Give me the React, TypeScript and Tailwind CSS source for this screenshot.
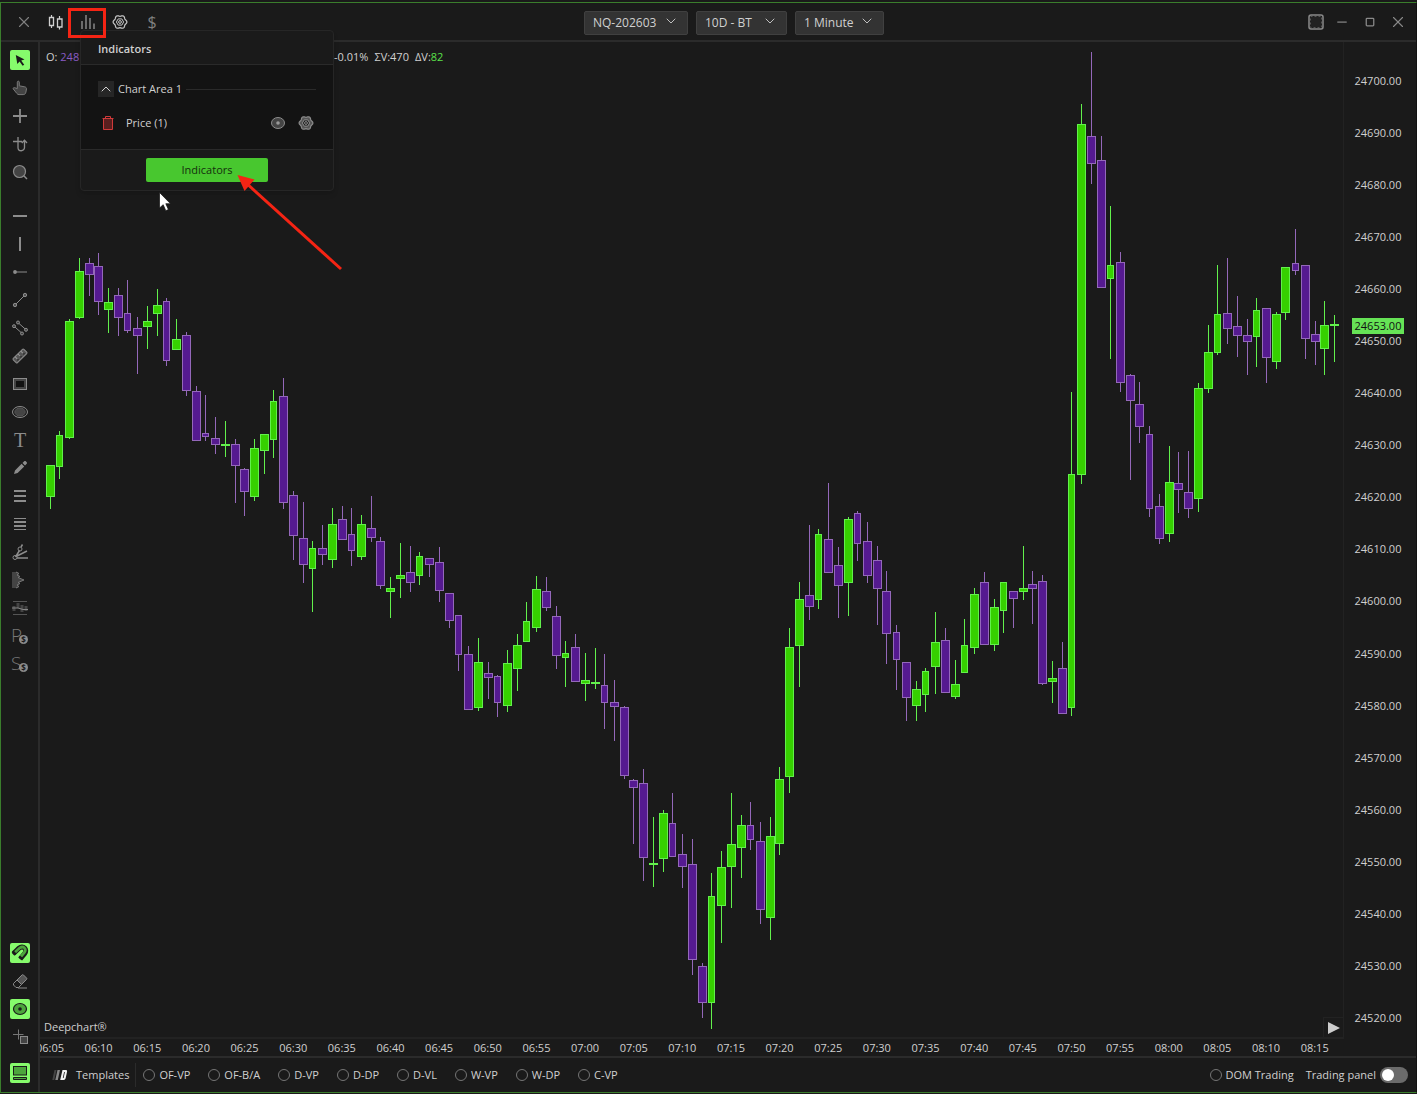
import type { ReactNode } from "react";
import { ChevronDown, ChevronUp, Minus, Square, X } from "lucide-react";

// [high, body top, body bottom, low, up]
type Candle = [number, number, number, number, 0 | 1];

const CANDLES: Candle[] = [
  [465, 465, 497, 509, 1], [431, 435, 467, 479, 1], [319, 321, 438, 439, 1], [258, 271, 318, 319, 1],
  [258, 263, 275, 296, 0], [253, 266, 302, 315, 0], [288, 302, 310, 333, 1], [288, 295, 318, 336, 0],
  [280, 313, 331, 333, 0], [317, 328, 336, 374, 0], [306, 321, 327, 349, 1], [289, 305, 314, 336, 1],
  [298, 301, 361, 366, 0], [319, 339, 350, 350, 1], [332, 335, 391, 396, 0], [386, 391, 441, 441, 0],
  [395, 433, 437, 441, 0], [417, 438, 445, 454, 0], [421, 444, 446, 457, 1], [439, 444, 466, 503, 0],
  [468, 469, 492, 516, 0], [439, 448, 497, 501, 1], [434, 434, 451, 474, 1], [390, 401, 440, 458, 1],
  [378, 396, 503, 509, 0], [491, 495, 536, 560, 0], [502, 538, 565, 583, 0], [541, 548, 569, 612, 1],
  [525, 548, 555, 565, 0], [508, 524, 560, 568, 1], [506, 519, 540, 540, 0], [508, 534, 551, 566, 0],
  [515, 524, 557, 560, 1], [496, 528, 538, 542, 0], [537, 541, 586, 589, 0], [577, 588, 592, 618, 1],
  [543, 575, 579, 598, 1], [546, 572, 583, 592, 0], [552, 556, 576, 585, 1], [558, 558, 565, 577, 0],
  [547, 562, 591, 602, 0], [593, 593, 621, 628, 0], [615, 615, 655, 671, 0], [646, 654, 710, 710, 0],
  [638, 662, 708, 711, 1], [662, 673, 678, 699, 0], [675, 676, 703, 717, 0], [650, 663, 706, 712, 1],
  [634, 645, 669, 691, 1], [602, 621, 642, 642, 1], [576, 589, 628, 632, 1], [577, 591, 608, 611, 0],
  [606, 616, 656, 669, 0], [641, 653, 658, 687, 1], [634, 647, 682, 682, 0], [653, 680, 684, 701, 1],
  [648, 682, 684, 689, 1], [654, 685, 703, 729, 0], [680, 702, 707, 741, 0], [706, 707, 776, 779, 0],
  [779, 780, 788, 844, 0], [769, 783, 858, 881, 0], [817, 863, 865, 887, 1], [810, 813, 859, 872, 1],
  [793, 823, 857, 857, 0], [834, 854, 867, 888, 0], [839, 864, 960, 975, 0], [963, 966, 1003, 1018, 0],
  [873, 896, 1003, 1029, 1], [851, 867, 906, 943, 1], [793, 844, 867, 908, 1], [815, 825, 848, 878, 1],
  [802, 825, 840, 850, 0], [822, 841, 910, 924, 0], [817, 836, 918, 940, 1], [767, 779, 844, 855, 1],
  [628, 647, 777, 793, 1], [582, 599, 646, 687, 1], [525, 595, 607, 620, 0], [529, 534, 600, 609, 1],
  [483, 539, 573, 573, 0], [547, 565, 586, 618, 0], [517, 519, 583, 616, 1], [511, 513, 544, 561, 0],
  [522, 541, 576, 583, 0], [546, 560, 589, 625, 0], [571, 591, 634, 664, 0], [625, 632, 660, 690, 0],
  [662, 662, 698, 721, 0], [681, 689, 706, 721, 1], [668, 671, 695, 712, 1], [612, 642, 667, 694, 1],
  [628, 640, 693, 693, 0], [660, 684, 697, 699, 1], [619, 645, 673, 673, 1], [588, 594, 648, 654, 1],
  [572, 582, 645, 645, 0], [599, 607, 645, 651, 1], [582, 582, 611, 633, 1], [591, 591, 599, 628, 0],
  [546, 588, 592, 600, 1], [571, 584, 589, 624, 0], [575, 581, 684, 685, 0], [661, 678, 682, 703, 1],
  [642, 668, 714, 714, 0], [392, 474, 708, 716, 1], [104, 124, 475, 484, 1], [52, 136, 164, 184, 0],
  [136, 160, 288, 288, 0], [206, 265, 279, 359, 1], [252, 262, 383, 392, 0], [374, 375, 401, 480, 0],
  [382, 404, 427, 443, 0], [426, 434, 509, 517, 0], [494, 506, 539, 544, 0], [446, 482, 534, 542, 1],
  [452, 483, 490, 513, 0], [451, 492, 509, 518, 0], [383, 388, 499, 512, 1], [325, 352, 389, 393, 1],
  [265, 314, 353, 355, 1], [258, 313, 329, 344, 0], [296, 326, 336, 357, 0], [319, 335, 342, 375, 0],
  [298, 310, 337, 367, 1], [308, 308, 358, 383, 0], [312, 314, 362, 369, 1], [267, 267, 313, 320, 1],
  [229, 263, 271, 275, 0], [265, 265, 339, 359, 0], [321, 334, 342, 365, 0], [301, 325, 349, 375, 1],
  [315, 324, 326, 362, 1],
];

const NARROW = new Set([
  1, 8, 12, 16, 23, 27, 31, 38, 42, 46, 49, 53, 57, 64, 68, 72, 79, 83, 87, 90, 94, 98, 105, 109, 113,
  120, 124, 128,
]);

const PRICES = Array.from({ length: 19 }, (_, i) => 24700 - i * 10);
const LAST_PRICE = 24653;

const TIMES = Array.from({ length: 27 }, (_, i) => {
  const m = 365 + i * 5;
  return `${String(Math.floor(m / 60)).padStart(2, "0")}:${String(m % 60).padStart(2, "0")}`;
});

const TEMPLATES = ["OF-VP", "OF-B/A", "D-VP", "D-DP", "D-VL", "W-VP", "W-DP", "C-VP"];

// six-lobed outline of the gear
const GEAR_POINTS = Array.from({ length: 48 }, (_, i) => {
  const a = (i / 48) * Math.PI * 2;
  const r = 6.3 + 0.6 * Math.cos(6 * a);
  return `${(10 + r * Math.cos(a)).toFixed(2)},${(10 + r * Math.sin(a)).toFixed(2)}`;
}).join(" ");

function Icon({ children }: { children: ReactNode }) {
  return (
    <svg width="20" height="20" viewBox="0 0 20 20" fill="none" stroke="currentColor" aria-hidden="true">
      {children}
    </svg>
  );
}

function Gear({ fill = "none", hub = "none" }: { fill?: string; hub?: string }) {
  return (
    <Icon>
      <polygon points={GEAR_POINTS} fill={fill} strokeWidth="1.2" />
      <path d="M8.2 6.9h3.6l1.8 3.1-1.8 3.1H8.2L6.4 10z" fill={hub} />
      <circle cx="10" cy="10" r="1.4" />
    </Icon>
  );
}

function CoinBadge() {
  return (
    <>
      <circle cx="13.5" cy="13.5" r="4.5" fill="#8c8c8c" stroke="none" />
      <text x="13.5" y="16.5" fontSize="8" fontWeight="700" textAnchor="middle" fill="#1a1a1a" stroke="none">
        $
      </text>
    </>
  );
}

const NAV_TOOLS: { label: string; icon: ReactNode; active?: boolean }[] = [
  {
    label: "Select",
    active: true,
    icon: <path d="M5.8 5l8.7 4.4-3.3 1.1 3 4.2-1.6 1.1-3-4.3-2.3 2.4z" fill="#1a1a1a" stroke="none" />,
  },
  {
    label: "Pan",
    icon: (
      <path
        d="M7.3 10.6V4.2c0-1.4 2-1.4 2 0v3.6l5.6 1.1c1.1.3 1.7 1 1.6 2l-.6 3.2c-.3 1.6-1.1 2.5-2.7 2.5H9c-1 0-1.6-.4-2.2-1.2L3.3 11c-.5-1 .6-1.7 1.4-1.3z"
        fill="#444"
        stroke="#7a7a7a"
      />
    ),
  },
  { label: "Crosshair", icon: <path d="M3 10h14M10 3v14" strokeWidth="1.8" /> },
  {
    label: "Anchor",
    icon: <path d="M3 7.5h9M8 3v10.5a3 3 0 0 0 6.5 0v-7M11.8 9l2.7-2.7L17 9" strokeWidth="1.3" />,
  },
  {
    label: "Zoom",
    icon: (
      <>
        <circle cx="9.5" cy="9.5" r="6" fill="#444" strokeWidth="1.2" />
        <path d="M13.8 13.8 17 17" strokeWidth="1.5" />
      </>
    ),
  },
];

const DRAW_TOOLS: { label: string; icon: ReactNode }[] = [
  { label: "Horizontal line", icon: <path d="M3 10h14" strokeWidth="2" /> },
  { label: "Vertical line", icon: <path d="M10 3v14" strokeWidth="2" /> },
  {
    label: "Ray",
    icon: (
      <>
        <path d="M5 10h12" stroke="#666" strokeWidth="1.5" />
        <circle cx="5" cy="10" r="1.9" fill="currentColor" stroke="none" />
      </>
    ),
  },
  {
    label: "Trend line",
    icon: (
      <>
        <path d="M6 14 14 6" />
        <circle cx="5" cy="15" r="1.7" fill="#555" />
        <circle cx="15" cy="5" r="1.7" fill="#555" />
      </>
    ),
  },
  {
    label: "Parallel channel",
    icon: (
      <>
        <path d="M4 8.2 12 15.3M8 4.6l8 7.1" />
        <circle cx="4" cy="8.2" r="1.5" fill="#444" />
        <circle cx="12" cy="15.5" r="1.5" fill="#444" />
        <circle cx="8" cy="4.5" r="1.5" fill="#444" />
        <circle cx="16" cy="11.8" r="1.5" fill="#444" />
      </>
    ),
  },
  {
    label: "Ruler",
    icon: (
      <g transform="rotate(-45 10 10)">
        <rect x="2.5" y="7" width="15" height="6" rx="1" fill="#555" />
        <path d="M6 7v3M10 7v3M14 7v3" stroke="#999" />
        <path d="M5 11.3h1.5M9.3 11.3h1.5M13.5 11.3H15" stroke="#1a1a1a" />
      </g>
    ),
  },
  {
    label: "Rectangle",
    icon: (
      <>
        <rect x="3.5" y="4.5" width="13" height="11" fill="#444" />
        <rect x="6" y="7" width="8" height="6" fill="#111" stroke="none" />
      </>
    ),
  },
  {
    label: "Ellipse",
    icon: (
      <>
        <ellipse cx="10" cy="10" rx="7.5" ry="5.5" />
        <ellipse cx="10" cy="10" rx="5.2" ry="4" fill="#444" stroke="#555" />
      </>
    ),
  },
  {
    label: "Text",
    icon: (
      <text
        x="10"
        y="16.5"
        fontSize="20"
        textAnchor="middle"
        fill="currentColor"
        stroke="none"
        className="font-['Liberation_Serif',serif]"
      >
        T
      </text>
    ),
  },
  {
    label: "Brush",
    icon: (
      <path
        d="M4 16l1-3.6 6.6-6.6 2.6 2.6L7.600 15zM12.5 5l1.700-1.700c.5-.5 1.100-.4 1.600 0l.9.9c.5.5.5 1.100 0 1.600L15 7.500z"
        fill="currentColor"
        stroke="none"
      />
    ),
  },
  { label: "Levels", icon: <path d="M4 5h12M4 10h12M4 15h12" strokeWidth="2" /> },
  {
    label: "Fibonacci",
    icon: (
      <>
        <path d="M4 4.5h12M4 15.5h12" />
        <path d="M4 8h12M4 12h12" strokeWidth="2" />
      </>
    ),
  },
  {
    label: "Fan",
    icon: (
      <>
        <path d="M5.5 15l4-6.5M11 5l1.500-2.500M6 14.500 17 9M7 16h11" strokeWidth="1.5" />
        <circle cx="5" cy="15.5" r="2" />
        <circle cx="10" cy="7" r="2" />
      </>
    ),
  },
  {
    label: "Volume profile",
    icon: (
      <>
        <path d="M2 2h5l2 1.500-2 1.500 3 1.500-2 1 6 2.500-6 2.500 2 1L7 15l2 1.500L7 18H2z" fill="#444" stroke="none" />
        <path d="M6 2l3 1.500L7 5l3 1.500-2 1 6 2.500-6 2.500 2 1L7 15l2 1.500L6 18" stroke="#777" />
      </>
    ),
  },
  {
    label: "Anchored VWAP",
    icon: (
      <>
        <path d="M3 3.5h14M3 16.5h14" stroke="#555" />
        <path d="M4 8v5M8 5v5M12 7v7M16 8v5" stroke="#444" strokeWidth="3" />
        <path d="M2 10h6l5 1.5h5" stroke="#888" />
      </>
    ),
  },
  {
    label: "Buy position",
    icon: (
      <>
        <text x="1" y="16" fontSize="19" fontWeight="300" fill="#777" stroke="none">P</text>
        <CoinBadge />
      </>
    ),
  },
  {
    label: "Sell position",
    icon: (
      <>
        <text x="1" y="16" fontSize="19" fontWeight="300" fill="#777" stroke="none">S</text>
        <CoinBadge />
      </>
    ),
  },
];

const VIEW_TOOLS: { label: string; icon: ReactNode; active?: boolean }[] = [
  {
    label: "Magnet",
    active: true,
    icon: (
      <>
        <path d="M3.5 10.5 9 5.2c4-3.5 9 1.3 5.6 5.500L10.200 15.800" stroke="#1a1a1a" strokeWidth="5" />
        <path d="M5 9.2 9.700 5c3.700-2.800 7.300 1 4.500 4.600l-3.500 4.200" stroke="#4ca53c" strokeWidth="2.8" />
        <path d="M3 11.2l2-1.900M10 16l1.700-2" stroke="#1a1a1a" strokeWidth="4" />
      </>
    ),
  },
  {
    label: "Eraser",
    icon: (
      <>
        <path d="M3.5 12.500 7 9l4.500 4.500-3 3H6L3.500 14z" strokeLinejoin="round" />
        <path d="M7 9l5-5c.5-.5 1-.5 1.500 0l3 3c.5.5.5 1 0 1.500l-5 5z" fill="#555" />
        <path d="M8 17h9" />
      </>
    ),
  },
  {
    label: "Show drawings",
    active: true,
    icon: (
      <>
        <ellipse cx="10" cy="10" rx="6.5" ry="5.5" fill="#4ca53c" stroke="#1a1a1a" strokeWidth="1.2" />
        <circle cx="10" cy="10" r="1.8" fill="#1a1a1a" stroke="none" />
      </>
    ),
  },
  {
    label: "Add layer",
    icon: (
      <>
        <path d="M3 7.5h10.500M8.500 2.500v10" stroke="#777" />
        <rect x="10.5" y="9.5" width="7" height="7" fill="#444" />
      </>
    ),
  },
];

function ToolButton({ label, icon, active }: { label: string; icon: ReactNode; active?: boolean }) {
  return (
    <button
      type="button"
      title={label}
      aria-label={label}
      className={`h-5 w-5 shrink-0 rounded-xs text-[#8c8c8c] ${active ? "bg-[#86fb6c]" : ""}`}
    >
      <Icon>{icon}</Icon>
    </button>
  );
}

function HeaderSelect({ label, value, width }: { label: string; value: string; width: string }) {
  return (
    <div className="relative">
      <select
        aria-label={label}
        className={`${width} h-6 appearance-none rounded-xs border border-[#404040] bg-[#333] pl-2 text-xs text-[#d0d0d0]`}
      >
        <option>{value}</option>
      </select>
      <ChevronDown size={16} strokeWidth={1.5} className="pointer-events-none absolute top-1 right-[9px] text-[#c0c0c0]" />
    </div>
  );
}

function Header() {
  return (
    <header className="grid h-[39px] shrink-0 grid-cols-[583fr_832fr] items-center border-b-2 border-[#2b2b2b]">
      <div className="flex pl-[7px] text-[#808080]">
        <button type="button" aria-label="Close" className="flex h-6 w-8 items-center justify-center">
          <X size={18} strokeWidth={1.5} />
        </button>
        <button type="button" aria-label="Chart type" className="flex h-6 w-8 items-center justify-center text-[#d0d0d0]">
          <Icon>
            <path d="M5.5 3v2.500M5.500 13.500V16M13.500 4v3M13.500 15v2.500" strokeWidth="1.2" />
            <path d="M3.5 5.500h4v8h-4zM11.500 7h4.500v8h-4.500z" strokeWidth="1.3" />
          </Icon>
        </button>
        <button type="button" aria-label="Indicators" className="flex h-6 w-8 items-center justify-center">
          <Icon>
            <path d="M4 9v8M8 3v14M12 6v11M16 11.500V17" strokeWidth="1.6" />
          </Icon>
        </button>
        <button type="button" aria-label="Settings" className="flex h-6 w-8 items-center justify-center text-[#c8c8c8]">
          <Gear />
        </button>
        <button type="button" aria-label="Trading" className="flex h-6 w-8 items-center justify-center text-base">
          $
        </button>
      </div>
      <div className="flex items-center justify-between">
        <div className="flex gap-2">
          <HeaderSelect label="Symbol" value="NQ-202603" width="w-[104px]" />
          <HeaderSelect label="Range" value="10D - BT" width="w-[91px]" />
          <HeaderSelect label="Interval" value="1 Minute" width="w-[89px]" />
        </div>
        <div className="flex pr-1 text-[#8a8a8a]">
          <button type="button" aria-label="Snap" className="flex h-6 w-6 items-center justify-center">
            <Icon>
              <rect x="3" y="3" width="14" height="14" rx="2" strokeWidth="1.5" />
              <rect x="4.5" y="4.5" width="11" height="11" strokeDasharray="2 2" stroke="#555" fill="#222" />
            </Icon>
          </button>
          <button type="button" aria-label="Minimize" className="flex h-6 w-7 items-center justify-center">
            <Minus size={14} strokeWidth={3} className="text-[#666]" />
          </button>
          <button type="button" aria-label="Maximize" className="flex h-6 w-7 items-center justify-center">
            <Square size={10} strokeWidth={3} />
          </button>
          <button type="button" aria-label="Close window" className="flex h-6 w-7 items-center justify-center">
            <X size={18} strokeWidth={1.5} />
          </button>
        </div>
      </div>
    </header>
  );
}

function Sidebar() {
  return (
    <aside className="flex w-[39px] shrink-0 flex-col items-start gap-2 border-r-2 border-[#2b2b2b] pt-2 pb-[9px] pl-[9px]">
      {NAV_TOOLS.map((t) => (
        <ToolButton key={t.label} {...t} />
      ))}
      <div className="mt-4 flex flex-col gap-2">
        {DRAW_TOOLS.map((t) => (
          <ToolButton key={t.label} {...t} />
        ))}
      </div>
      <div className="mt-auto flex flex-col gap-2">
        {VIEW_TOOLS.map((t) => (
          <ToolButton key={t.label} {...t} />
        ))}
      </div>
      <div className="mt-2 flex">
        <ToolButton
          label="Bottom panel"
          active
          icon={
            <>
              <rect x="3.5" y="3.5" width="13" height="8.5" fill="#4ca53c" stroke="#1a1a1a" />
              <path d="M3.5 14.500h13v2h-13z" stroke="#1a1a1a" fill="#4ca53c" />
            </>
          }
        />
      </div>
    </aside>
  );
}

function CandleChart() {
  return (
    <svg
      viewBox="40 42 1303 995"
      preserveAspectRatio="none"
      shapeRendering="crispEdges"
      className="absolute inset-0 h-full w-full"
      role="img"
      aria-label="NQ 1 minute candles"
    >
      {CANDLES.map(([high, top, bottom, low, up], i) => {
        const x = Math.floor(50.15 + i * 9.7305);
        const half = NARROW.has(i) ? 3 : 4;
        const line = up ? "#62f04c" : "#9468ba";
        return (
          <g key={i}>
            <rect x={x} y={high} width={1} height={low - high} fill={line} />
            <rect x={x - half} y={top} width={half * 2 + 1} height={bottom - top} fill={line} />
            {bottom - top > 2 && (
              <rect
                x={x - half + 1}
                y={top + 1}
                width={half * 2 - 1}
                height={bottom - top - 2}
                fill={up ? "#36d000" : "#551a90"}
              />
            )}
          </g>
        );
      })}
    </svg>
  );
}

function PriceAxis() {
  const offset = (PRICES[0] - LAST_PRICE) / 180;
  return (
    <div className="relative mt-[31px] mb-[13px] ml-2 flex w-[52px] flex-col justify-between">
      {PRICES.map((p) => (
        <span key={p} className="h-4 text-center text-[11px] leading-4">
          {p.toFixed(2)}
        </span>
      ))}
      <span
        className="absolute left-0 h-4 w-full bg-[#66e356] text-center text-[11px] leading-4 text-[#111]"
        style={{ top: `calc((100% - 16px) * ${offset})` }}
      >
        {LAST_PRICE.toFixed(2)}
      </span>
    </div>
  );
}

function Chart() {
  return (
    <section className="flex min-h-0 flex-1 flex-col">
      <div className="flex min-h-0 flex-1">
        <div className="relative flex-1 border-r border-b-2 border-[#222]">
          <CandleChart />
          <p className="absolute top-[7px] left-[6px] flex gap-[6px] text-[11px] leading-4 whitespace-pre">
            <span className="w-[282px]">
              O: <span className="text-[#8a5cc4]">248</span>
            </span>
            <span>-0.01%</span>
            <span>ΣV:470</span>
            <span>
              ΔV:<span className="text-[#5be04a]">82</span>
            </span>
          </p>
          <span className="absolute bottom-[2px] left-1 text-[11px] leading-4">Deepchart®</span>
          <button
            type="button"
            aria-label="Go to latest"
            className="absolute right-0 bottom-0 flex h-5 w-5 items-center justify-center border-t border-l border-[#222]"
          >
            <svg width="12" height="12" viewBox="0 0 12 12" aria-hidden="true">
              <path d="M0 0l12 6-12 6z" fill="#ccc" />
            </svg>
          </button>
        </div>
        <PriceAxis />
        <div className="w-3 shrink-0" />
      </div>
      <div className="h-[17px] overflow-hidden">
        <div className="mr-[81px] -ml-[10px] flex justify-between pt-px">
          {TIMES.map((t) => (
            <span key={t} className="w-10 text-center text-[11px] leading-4">
              {t}
            </span>
          ))}
        </div>
      </div>
    </section>
  );
}

function TemplateOption({ label }: { label: string }) {
  return (
    <label className="flex items-center gap-1 whitespace-nowrap">
      <input type="radio" name="template" className="h-3 w-3 appearance-none rounded-full border border-[#757575]" />
      {label}
    </label>
  );
}

function Footer() {
  return (
    <footer className="flex h-9 shrink-0 items-center border-t-2 border-[#2b2b2b] pl-3 text-[11px]">
      <svg width="16" height="12" viewBox="0 0 16 12" aria-hidden="true">
        <path d="M2.5 1h2L2.300 11h-2z" fill="#444" />
        <path d="M5.5 1H8L5.800 11H3.300z" fill="#888" />
        <path
          d="M10.5 1H14c1 0 1.300.8 1 2l-1.300 6c-.3 1.300-1 2-2 2H8.200zm1.600 2-1.300 6h.8l1.300-6z"
          fill="#f2f2f2"
          fillRule="evenodd"
        />
      </svg>
      <button type="button" className="ml-2 text-[11px]">
        Templates
      </button>
      <div className="ml-[6px] h-6 w-px bg-[#2b2b2b]" />
      <div className="ml-[7px] flex gap-[18px]">
        {TEMPLATES.map((t) => (
          <TemplateOption key={t} label={t} />
        ))}
      </div>
      <div className="mr-2 ml-auto flex items-center gap-3">
        <TemplateOption label="DOM Trading" />
        <label className="flex items-center gap-1">
          Trading panel
          <input
            type="checkbox"
            role="switch"
            className="flex h-4 w-7 appearance-none items-center rounded-full bg-[#6b6b6b] px-0.5 before:h-3 before:w-3 before:rounded-full before:bg-white"
          />
        </label>
      </div>
    </footer>
  );
}

function IndicatorsPopup() {
  return (
    <div className="absolute top-[30px] left-[80px] w-[254px] rounded-sm border border-[#262626] bg-[#1a1a1a] shadow-md">
      <h2 className="h-[34px] border-b border-[#2a2a2a] pl-[17px] text-[11px] leading-9 font-semibold">Indicators</h2>
      <div className="h-[85px] border-b border-[#2a2a2a] bg-[#131313] px-[17px] pt-4">
        <div className="flex h-4 items-center">
          <button type="button" aria-label="Collapse" className="flex h-4 w-4 items-center justify-center bg-[#262626]">
            <ChevronUp size={16} strokeWidth={1.5} />
          </button>
          <span className="ml-1 text-[11px]">Chart Area 1</span>
          <span className="ml-1 h-px flex-1 bg-[#2a2a2a]" />
        </div>
        <div className="mt-4 flex h-5 items-center">
          <button type="button" aria-label="Remove" className="text-[#d03a3a]">
            <Icon>
              <path d="M5.5 5.500h9V16.500h-9z" fill="#5a1f1f" />
              <path d="M4.5 5.500h11M7.500 5V3.500h5V5" />
            </Icon>
          </button>
          <span className="ml-2 text-[11px]">Price (1)</span>
          <button type="button" aria-label="Toggle visibility" className="mr-2 ml-auto text-[#8c8c8c]">
            <Icon>
              <ellipse cx="10" cy="10" rx="6.5" ry="5.5" fill="#444" />
              <circle cx="10" cy="10" r="1.8" fill="#999" stroke="none" />
            </Icon>
          </button>
          <button type="button" aria-label="Price settings" className="text-[#8c8c8c]">
            <Gear fill="#555" hub="#1a1a1a" />
          </button>
        </div>
      </div>
      <div className="flex h-10 items-center justify-center">
        <button type="button" className="h-6 w-[122px] rounded-xs bg-[#48c72f] text-[11px] text-[#14300d]">
          Indicators
        </button>
      </div>
    </div>
  );
}

export default function App() {
  return (
    <div className="relative flex h-screen flex-col overflow-hidden bg-[#1a1a1a] pt-0.5 pb-px font-['Open_Sans','Noto_Sans',sans-serif] text-[#d0d0d0]">
      <div className="flex min-h-0 flex-1 flex-col border-t border-r border-b border-l border-t-[#3a7d2c] border-r-[#111] border-b-[#3a7d2c] border-l-[#3a7d2c]">
        <Header />
        <div className="flex min-h-0 flex-1">
          <Sidebar />
          <main className="flex min-w-0 flex-1 flex-col">
            <Chart />
            <Footer />
          </main>
        </div>
      </div>

      <IndicatorsPopup />

      <div className="pointer-events-none absolute top-2 left-[68px] h-[30px] w-[38px] border-3 border-[#f52414]" />
      <svg
        className="pointer-events-none absolute top-[170px] left-[150px]"
        width="200"
        height="110"
        viewBox="150 170 200 110"
        aria-hidden="true"
      >
        <path d="M245 182l96 87" stroke="#f52414" strokeWidth="3" />
        <path d="M237.5 175l17 4.500-10 11.500z" fill="#f52414" />
        <path d="M159.5 192.500v15.500l3.700-3.300 2.600 6 2.600-1.200-2.600-5.800h4.700z" fill="#fff" stroke="#111" strokeWidth=".7" />
      </svg>
    </div>
  );
}
